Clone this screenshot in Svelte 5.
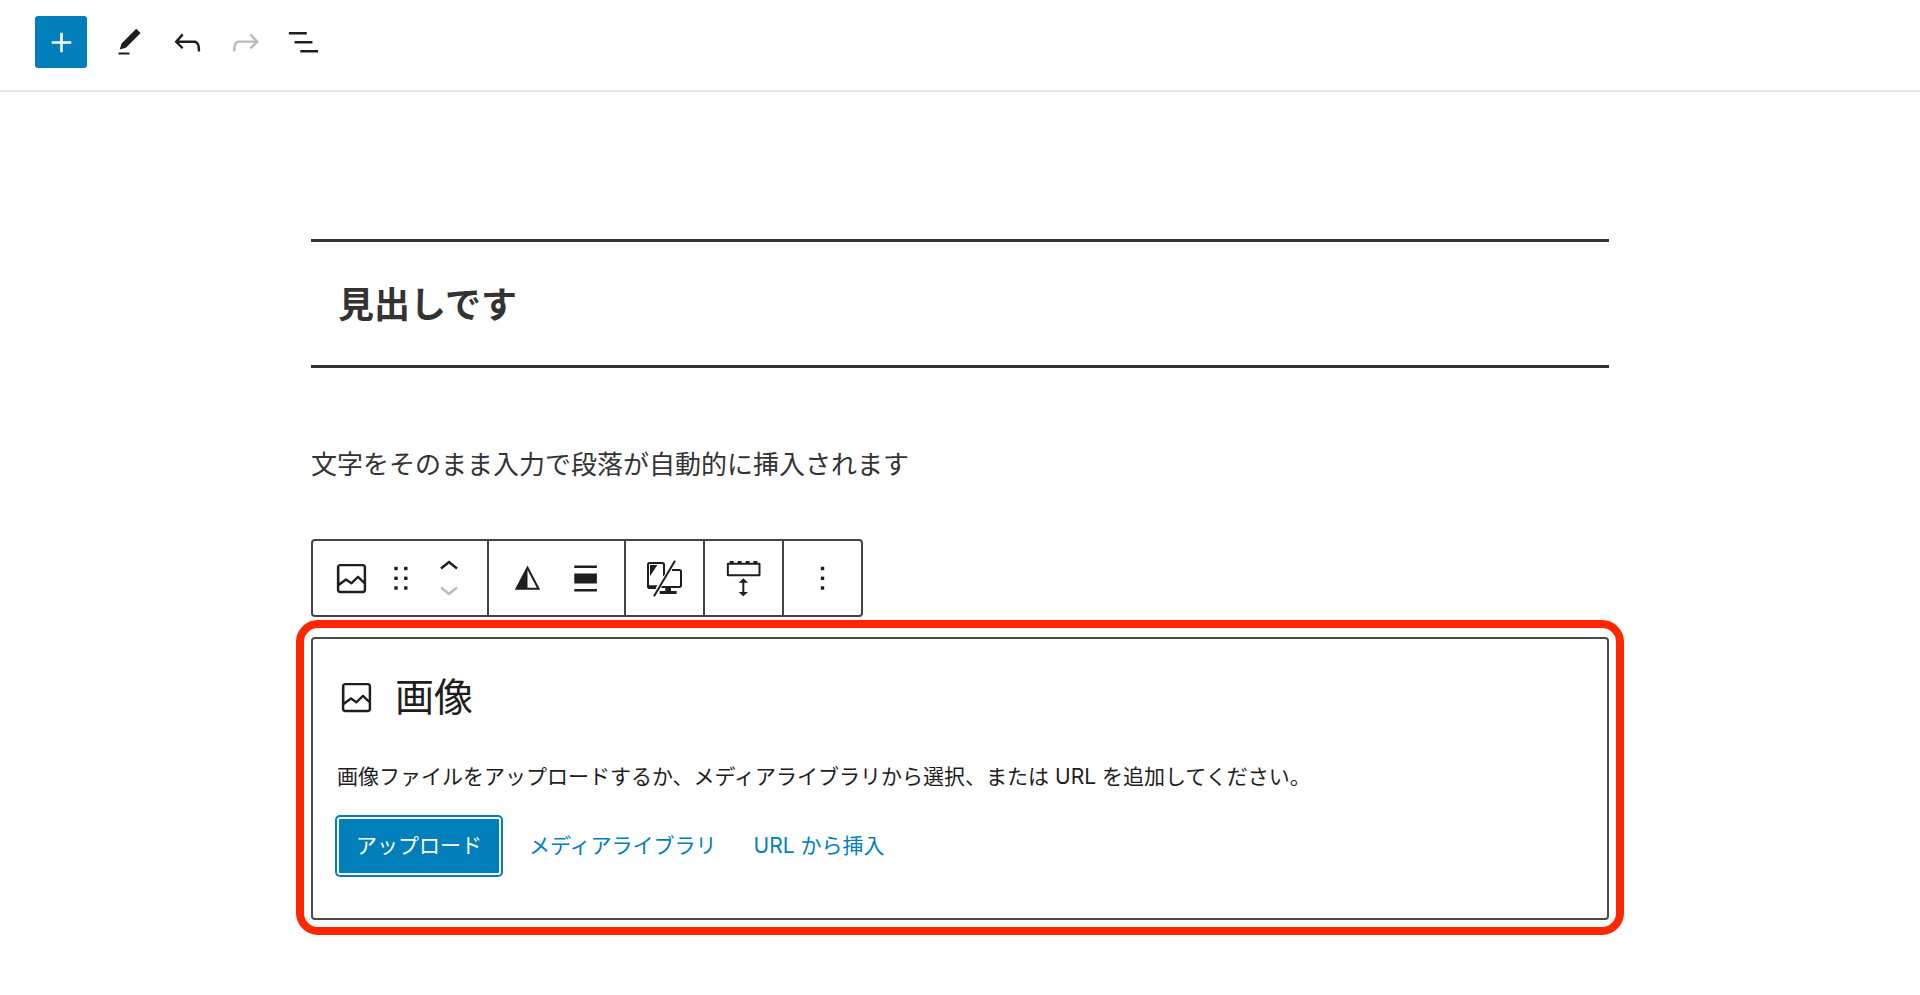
<script>
  const imagePath =
    'M19 3H5c-1.1 0-2 .9-2 2v14c0 1.1.9 2 2 2h14c1.1 0 2-.9 2-2V5c0-1.1-.9-2-2-2zM5 4.5h14c.3 0 .5.2.5.5v8.4l-3-2.9c-.3-.3-.8-.3-1 0L11.9 14 9 12c-.3-.2-.6-.2-.8 0l-3.6 2.6V5c-.1-.3.1-.5.4-.5zm14 15H5c-.3 0-.5-.2-.5-.5v-2.4l4.1-3 3 1.9c.3.2.7.2.9-.1L16 12l3.5 3.4V19c0 .3-.2.5-.5.5z';
</script>

{#snippet imageIcon()}
  <svg class="icon" viewBox="0 0 24 24" aria-hidden="true"><path d={imagePath} /></svg>
{/snippet}

<header class="topbar">
  <button class="add" type="button" aria-label="+">
    <svg class="icon" viewBox="0 0 24 24"><path d="M18 11.2h-5.2V6h-1.6v5.2H6v1.6h5.2V18h1.6v-5.2H18z" /></svg>
  </button>
  <div class="tools">
    <button class="tool" type="button" aria-label="編集">
      <svg class="icon small" viewBox="0 0 24 24"><path d="M20.1 5.1L16.9 2 6.2 12.7l-1.3 4.4 4.5-1.3L20.1 5.1zM4 20.8h8v-1.5H4v1.5z" /></svg>
    </button>
    <button class="tool" type="button" aria-label="元に戻す">
      <svg class="icon" viewBox="0 0 24 24"><path d="M18.3 11.7c-.6-.6-1.4-.9-2.3-.9H6.7l2.9-3.3-1.1-1-4.5 5L8.5 16l1-1-2.7-2.7H16c.5 0 .9.2 1.3.5 1 1 1 3.4 1 4.5v.3h1.5v-.2c0-1.5 0-4.3-1.5-5.7z" /></svg>
    </button>
    <button class="tool" type="button" aria-label="やり直す" disabled>
      <svg class="icon" viewBox="0 0 24 24"><path d="M15.6 6.5l-1.1 1 2.9 3.3H8c-.9 0-1.7.3-2.3.9-1.4 1.5-1.4 4.2-1.4 5.6v.2h1.5v-.3c0-1.1 0-3.5 1-4.5.3-.3.7-.5 1.3-.5h9.2L14.5 15l1.1 1.1 4.6-4.6-4.6-5z" /></svg>
    </button>
    <button class="tool" type="button" aria-label="リスト表示">
      <svg class="icon" viewBox="0 0 24 24"><path d="M3 5.600h11v1.500H3zM6.500 11.100h11v1.500h-11zM10 16.600h11v1.500H10z" /></svg>
    </button>
  </div>
</header>

<main class="canvas">
  <h2 class="heading">見出しです</h2>
  <p class="paragraph">文字をそのまま入力で段落が自動的に挿入されます</p>

  <div class="toolbar" role="toolbar" aria-label="ブロックツール">
    <div class="group">
      <button class="tool" type="button" aria-label="画像">{@render imageIcon()}</button>
      <button class="tool drag" type="button" aria-label="ドラッグ">
        <svg class="icon" viewBox="0 0 39 39">
          {#each [9.5, 19.3, 29] as y}
            {#each [15, 24.8] as x}
              <rect x={x - 1.7} y={y - 1.7} width="3.4" height="3.4" />
            {/each}
          {/each}
        </svg>
      </button>
      <div class="movers">
        <button class="tool" type="button" aria-label="上に移動">
          <svg class="caret" viewBox="0 0 20 12"><path d="M2 9.500 10 3l8 6.500" /></svg>
        </button>
        <button class="tool" type="button" aria-label="下に移動" disabled>
          <svg class="caret" viewBox="0 0 20 12"><path d="M2 2.500 10 9l8-6.500" /></svg>
        </button>
      </div>
    </div>
    <div class="group">
      <button class="tool" type="button" aria-label="デュオトーン">
        <svg class="icon" viewBox="0 0 39 39">
          <path fill-rule="evenodd" d="M19.500 6.500 32.200 30.700H6.800zM19.500 11v17.700h9.300z" />
        </svg>
      </button>
      <button class="tool" type="button" aria-label="配置">
        <svg class="icon" viewBox="0 0 39 39"><path d="M8.300 6.500h22.600v2.400H8.300zM8.300 14.500h22.600v10H8.300zM8.300 30h22.600v2.400H8.300z" /></svg>
      </button>
    </div>
    <div class="group">
      <button class="tool" type="button" aria-label="表示切替">
        <svg class="icon" viewBox="226 113 117 117">
          <path class="line" d="M307 146h22q5 0 5 5v41q0 5-5 5h-59" />
          <path class="line" d="M283 164v-34q0-5-5-5h-38q-5 0-5 5v65q0 5 5 5h18" />
          <path d="M241 131h22l-22 34zM234 192h29l-6 11h-18q-5 0-5-5zM287 198h17v11h17v9h-51v-9h17z" />
          <path class="line halo" d="M313 123 256 220" />
          <path class="line" d="M316 118 253 225" />
        </svg>
      </button>
    </div>
    <div class="group">
      <button class="tool" type="button" aria-label="余白">
        <svg class="icon" viewBox="463 113 117 117">
          <rect class="line" x="474.500" y="127" width="95" height="35" rx="1" />
          <path d="M480 119h12v7h-12zM504 119h12v7h-12zM528 119h12v7h-12zM551 119h12v7h-12z" />
          <path d="m521 171 14 13h-11v28h11l-14 13-14-13h11v-28h-11z" />
        </svg>
      </button>
    </div>
    <div class="group">
      <button class="tool" type="button" aria-label="オプション">
        <svg class="icon" viewBox="0 0 39 39">
          {#each [9.5, 19.3, 29] as y}
            <rect x="17.8" y={y - 1.7} width="3.4" height="3.4" />
          {/each}
        </svg>
      </button>
    </div>
  </div>

  <div class="highlight">
    <section class="placeholder">
      <h3 class="label">{@render imageIcon()}<span>画像</span></h3>
      <p class="instructions">画像ファイルをアップロードするか、メディアライブラリから選択、または URL を追加してください。</p>
      <div class="actions">
        <button class="primary" type="button">アップロード</button>
        <button class="link" type="button">メディアライブラリ</button>
        <button class="link" type="button">URL から挿入</button>
      </div>
    </section>
  </div>
</main>

<style>
  :global(body) {
    margin: 0;
    background: #fff;
    color: #1e1e1e;
    font-family: Inter, 'Noto Sans CJK JP', sans-serif;
  }

  button {
    margin: 0;
    padding: 0;
    border: 0;
    background: none;
    color: inherit;
    font: inherit;
    cursor: pointer;
  }

  .icon {
    display: block;
    flex: none;
    width: 39px;
    height: 39px;
    fill: currentColor;
  }

  .icon.small {
    width: 33px;
    height: 33px;
  }

  .line {
    fill: none;
    stroke: currentColor;
    stroke-width: 6;
  }

  .halo {
    stroke: #fff;
    stroke-width: 11;
  }

  .topbar {
    display: flex;
    align-items: center;
    gap: 13px;
    padding: 16px 35px 22px;
    border-bottom: 2px solid #e4e4e4;
  }

  .add {
    display: flex;
    align-items: center;
    justify-content: center;
    width: 52px;
    height: 52px;
    border-radius: 3px;
    background: #007fba;
    color: #fff;
  }

  .tools {
    display: flex;
  }

  .tool {
    display: flex;
    align-items: center;
    justify-content: center;
    width: 58px;
  }

  .tool:disabled {
    color: #bbb;
    cursor: default;
  }

  .canvas {
    box-sizing: border-box;
    max-width: 1298px;
    margin: 0 auto;
    padding: 147px 0 60px;
  }

  .heading {
    margin: 0;
    padding: 35px 27px 32px;
    border-top: 3px solid #333;
    border-bottom: 3px solid #333;
    color: #333;
    font-size: 36px;
    font-weight: 700;
    line-height: 56px;
  }

  .paragraph {
    margin: 73px 0 50px;
    color: #333;
    font-size: 26px;
    line-height: 48px;
  }

  .toolbar {
    display: flex;
    width: fit-content;
    border: 2px solid #444;
    border-radius: 4px;
  }

  .group {
    display: flex;
    gap: 1px;
    padding: 0 10px;
  }

  .group + .group {
    border-left: 2px solid #444;
  }

  .group .tool {
    width: 57px;
    height: 74px;
  }

  .group .drag {
    width: 38px;
  }

  .movers {
    display: flex;
    flex-direction: column;
    justify-content: center;
  }

  .movers .tool {
    height: 26px;
  }

  .caret {
    width: 20px;
    height: 12px;
    fill: none;
    stroke: currentColor;
    stroke-width: 2.5;
  }

  .highlight {
    margin: 3px -15px 0;
    padding: 9px 7px 7px;
    border: 8px solid #ff2600;
    border-radius: 22px;
  }

  .placeholder {
    padding: 30px 24px 43px;
    border: 2px solid #4a4a4a;
    border-radius: 4px;
  }

  .label {
    display: flex;
    align-items: center;
    gap: 19px;
    margin: 0 0 34px;
    font-size: 39px;
    font-weight: 400;
    line-height: 56px;
  }

  .instructions {
    margin: 0 0 22px;
    font-size: 21px;
    line-height: 36px;
  }

  .actions {
    display: flex;
    flex-wrap: wrap;
    align-items: center;
    gap: 19px;
    font-size: 21px;
    line-height: 58px;
  }

  .primary {
    padding: 0 19px;
    border-radius: 3px;
    background: #007fba;
    box-shadow: inset 0 0 0 2px #fff, 0 0 0 2px #007fba;
    color: #fff;
  }

  .link {
    padding: 0 9px;
    color: #007fba;
  }
</style>
